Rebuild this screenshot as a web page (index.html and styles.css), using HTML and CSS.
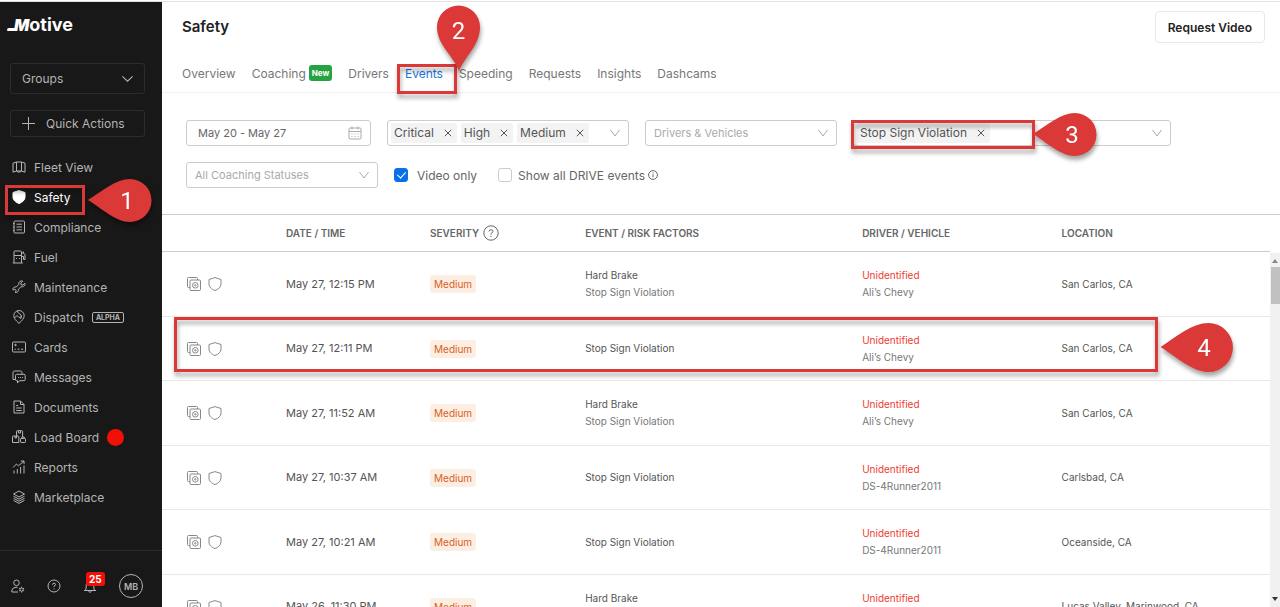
FILE: index.html
```html
<!DOCTYPE html>
<html lang="en">
<head>
<meta charset="utf-8">
<title>Safety</title>
<link rel="stylesheet" href="styles.css">
</head>
<body>
<svg class="defs" aria-hidden="true">
  <symbol id="chev" viewBox="0 0 10 10"><path d="M.5 2 5 8 9.500 2"/></symbol>
  <symbol id="x" viewBox="0 0 8 8"><path d="M.8.8l6.400 6.400M7.200.8.8 7.200"/></symbol>
  <symbol id="clip" viewBox="0 0 14 14"><path d="M3 10.500H1.500a1 1 0 0 1-1-1v-8a1 1 0 0 1 1-1h8a1 1 0 0 1 1 1V3"/><rect x="3" y="3" width="10.500" height="10.500" rx="1"/><circle cx="8.300" cy="8.300" r="2.800"/><circle cx="8.300" cy="8.300" r=".7"/></symbol>
  <symbol id="shield" viewBox="0 0 14 14"><path d="M7 .6 13 2.500V7c0 3-2.500 5.300-6 6.500C3.500 12.300 1 10 1 7V2.500z"/></symbol>
  <symbol id="pin" viewBox="0 0 64 43"><path d="M0 21C14 12 28 0 42 0a21.500 21.500 0 0 1 0 43C28 43 13 29 0 21z"/></symbol>
</svg>
<div class="app">
  <aside class="sidebar">
    <a class="logo" href="#"><span class="logo-m">M</span>otive</a>
    <button class="side-btn groups">Groups<svg class="ic chev" viewBox="0 0 10 10"><path d="M.3 3 5 7.500 9.700 3"/></svg></button>
    <button class="side-btn quick"><svg class="ic plus" viewBox="0 0 13 13"><path d="M6.500 0v13M0 6.500h13"/></svg>Quick Actions</button>
    <nav class="nav">
      <a href="#"><svg class="ic" viewBox="0 0 14 14"><path d="M1 3.200 4.500 2v9L1 12.200zM4.500 2h5v9h-5M9.500 11l3.500 1.200v-9L9.500 2M4.500 11l1.500 1h2l1.500-1"/></svg>Fleet View</a>
      <a href="#" class="on"><svg class="ic" viewBox="0 0 14 14"><use href="#shield"/></svg>Safety</a>
      <a href="#"><svg class="ic" viewBox="0 0 14 14"><rect x="2" y="1" width="10.500" height="12" rx="1"/><path d="M4.500 4.200H10M4.500 7H10M4.500 9.800H10M1 3.500h1.500M1 7h1.500M1 10.500h1.500"/></svg>Compliance</a>
      <a href="#"><svg class="ic" viewBox="0 0 14 14"><path d="M2 13V2q0-1 1-1h5.500q1 0 1 1v11M.8 13h10M2 5.500h7.500M4 8.500h1M7 8.500h1M9.500 3h2l1.500 1.500v5h-1.500v-3H9.500M11.500 3V1.500"/></svg>Fuel</a>
      <a href="#"><svg class="ic" viewBox="0 0 14 14"><path d="M12.800 3.200 11 5 9 4.800 8.800 3l1.900-1.900C8.500.3 6.400 1.800 6.800 4.400L4.300 7C2.200 6.400.5 8 1 10l1.800-.8 1.400 1.200-.9 2.200c2.300.3 3.500-1.600 3-3.300l2.800-2.600c2.600.5 4.500-1.200 3.700-3.500z"/></svg>Maintenance</a>
      <a href="#"><svg class="ic" viewBox="0 0 14 14"><path d="M7 13.400C4 10.500 1.800 8.500 1.800 5.700a5.200 5.200 0 0 1 10.400 0c0 2.800-2.200 4.800-5.200 7.700zM2.500 8 5 5.500 7 7.500l3-1M5.500 1c0 2 1 2 2.500 3s2 3 .5 5"/></svg>Dispatch<span class="alpha">ALPHA</span></a>
      <a href="#"><svg class="ic" viewBox="0 0 14 14"><rect x=".5" y="2" width="13" height="10" rx="1"/><path d="M2.700 5h1.600M2.700 9.200h1.200M5.500 9.200h2M9 9.200h2.200"/><circle cx="3.500" cy="5" r=".7"/></svg>Cards</a>
      <a href="#"><svg class="ic" viewBox="0 0 14 14"><path d="M3.500 9.500H1v-7Q1 1 2.500 1h6Q10 1 10 2.500V4M3.500 5.500q0-1.200 1.200-1.200h7.300q1.200 0 1.200 1.200v4q0 1.200-1.200 1.200H7.500L5.500 13v-2.300h-.8q-1.200 0-1.200-1.200zM6 7.600h1M8 7.600h1M10 7.600h1"/></svg>Messages</a>
      <a href="#"><svg class="ic" viewBox="0 0 14 14"><path d="M2 1h6.500L12 4.500V13H2zM8.500 1v3.500H12M4.200 5.500h2M4.200 8h5.500M4.200 10.500h5.500"/></svg>Documents</a>
      <a href="#"><svg class="ic" viewBox="0 0 14 14"><path d="M4.500 6V1.500q0-.8.800-.8h4.500q.8 0 .8.800V7M6.500 1v2h2V1M.5 12.500V6.800q0-.8.800-.8H6q.8 0 .8.800v5.700zM3 6v2h1.500V6"/><rect x="8.500" y="8.500" width="5" height="4" rx=".7"/><path d="M9.800 8.500V7h2.400v1.500"/></svg>Load Board<span class="dot"></span></a>
      <a href="#"><svg class="ic" viewBox="0 0 14 14"><path d="M2 13.500v-3M5.300 13.500V9M8.600 13.500V7M12 13.500V5.500M1 7.500 4.500 4l2 1.800L12 1M8.800 1H12v3"/></svg>Reports</a>
      <a href="#"><svg class="ic" viewBox="0 0 14 14"><path d="M7 1l5.500 3L7 7 1.500 4zM1.500 6.200l5.500 3 5.500-3M1.500 8.300l5.500 3 5.500-3M1.500 10.400l5.500 3 5.500-3"/></svg>Marketplace</a>
    </nav>
    <div class="side-foot">
      <button aria-label="Admin"><svg class="ic" viewBox="0 0 14 14"><circle cx="5.500" cy="3.800" r="2.800"/><path d="M7 13H.8v-1.500Q1.500 8.300 5 8.300h1.500"/><circle cx="10.600" cy="10.600" r="1.600"/><path d="M10.600 7.700v1.200M10.600 12.300v1.200M8.100 9.200l1 .6M12.100 11.400l1 .6M8.100 12l1-.6M12.100 9.800l1-.6"/></svg></button>
      <button aria-label="Help"><svg class="ic" viewBox="0 0 14 14"><circle cx="7" cy="7" r="6"/><path d="M5.500 5.700q0-1.500 1.500-1.500t1.500 1.400Q8.500 6.500 7 7.200V8M7 9.300v1"/></svg></button>
      <button class="bell" aria-label="Notifications"><svg class="ic" viewBox="0 0 14 14"><path d="M1 11.500h12M2.500 11.500 3.200 9V5.500a3.800 3.800 0 0 1 7.600 0V9l.7 2.500M5.500 12.500q1.500 1.500 3 0"/></svg><span class="count">25</span></button>
      <button class="avatar">MB</button>
    </div>
  </aside>

  <main class="main">
    <header class="top">
      <h1>Safety</h1>
      <button class="request">Request Video</button>
    </header>
    <nav class="tabs">
      <a href="#">Overview</a><a href="#">Coaching<span class="new">New</span></a><a href="#">Drivers</a><a href="#" class="on">Events</a><a href="#">Speeding</a><a href="#">Requests</a><a href="#">Insights</a><a href="#">Dashcams</a>
    </nav>
    <form class="filters">
      <div class="line">
        <label class="field date"><input type="text" value="May 20 - May 27" aria-label="Date range"><svg class="ic" viewBox="0 0 14 14"><rect x="1" y="2" width="12" height="11" rx="1"/><path d="M1 5.500h12M4 .5v3M10 .5v3M3.500 8h1M6.500 8h1M9.500 8h1M3.500 10.500h1M6.500 10.500h1M9.500 10.500h1"/></svg></label>
        <div class="field tags sev">
          <span class="tag">Critical<button type="button" aria-label="Remove Critical"><svg class="ic"><use href="#x"/></svg></button></span>
          <span class="tag">High<button type="button" aria-label="Remove High"><svg class="ic"><use href="#x"/></svg></button></span>
          <span class="tag">Medium<button type="button" aria-label="Remove Medium"><svg class="ic"><use href="#x"/></svg></button></span>
          <svg class="ic down"><use href="#chev"/></svg>
        </div>
        <label class="field drv"><select aria-label="Drivers"><option>Drivers &amp; Vehicles</option></select><svg class="ic down"><use href="#chev"/></svg></label>
        <div class="field tags evt">
          <span class="tag">Stop Sign Violation<button type="button" aria-label="Remove Stop Sign Violation"><svg class="ic"><use href="#x"/></svg></button></span>
          <svg class="ic down"><use href="#chev"/></svg>
        </div>
      </div>
      <div class="line">
        <label class="field coach"><select aria-label="Coaching status"><option>All Coaching Statuses</option></select><svg class="ic down"><use href="#chev"/></svg></label>
        <label class="check"><input type="checkbox" checked>Video only</label>
        <label class="check second"><input type="checkbox">Show all DRIVE events<svg class="ic info" viewBox="0 0 10 10"><circle cx="5" cy="5" r="4.400"/><path d="M5 4.300v3M5 2.500v1"/></svg></label>
      </div>
    </form>
    <section class="events">
      <div class="scroll">
      <table>
        <colgroup><col class="c0"><col class="c1"><col class="c2"><col class="c3"><col class="c4"><col></colgroup>
        <thead><tr><th></th><th>DATE / TIME</th><th><span class="help">SEVERITY<svg class="ic" viewBox="0 0 16 16"><circle cx="8" cy="8" r="7.200"/><path d="M6 6.500Q6 4.800 8 4.800t2 1.600Q10 7.500 8 8.500v1M8 10.800v1.200"/></svg></span></th><th>EVENT / RISK FACTORS</th><th>DRIVER / VEHICLE</th><th>LOCATION</th></tr></thead>
        <tbody>
          <tr><td><span class="acts"><button aria-label="Clip"><svg class="ic"><use href="#clip"/></svg></button><button aria-label="Safety"><svg class="ic"><use href="#shield"/></svg></button></span></td><td class="when">May 27, 12:15 PM</td><td><span class="med">Medium</span></td><td>Hard Brake<small>Stop Sign Violation</small></td><td><b>Unidentified</b><small>Ali’s Chevy</small></td><td>San Carlos, CA</td></tr>
          <tr><td><span class="acts"><button aria-label="Clip"><svg class="ic"><use href="#clip"/></svg></button><button aria-label="Safety"><svg class="ic"><use href="#shield"/></svg></button></span></td><td class="when">May 27, 12:11 PM</td><td><span class="med">Medium</span></td><td>Stop Sign Violation</td><td><b>Unidentified</b><small>Ali’s Chevy</small></td><td>San Carlos, CA</td></tr>
          <tr><td><span class="acts"><button aria-label="Clip"><svg class="ic"><use href="#clip"/></svg></button><button aria-label="Safety"><svg class="ic"><use href="#shield"/></svg></button></span></td><td class="when">May 27, 11:52 AM</td><td><span class="med">Medium</span></td><td>Hard Brake<small>Stop Sign Violation</small></td><td><b>Unidentified</b><small>Ali’s Chevy</small></td><td>San Carlos, CA</td></tr>
          <tr><td><span class="acts"><button aria-label="Clip"><svg class="ic"><use href="#clip"/></svg></button><button aria-label="Safety"><svg class="ic"><use href="#shield"/></svg></button></span></td><td class="when">May 27, 10:37 AM</td><td><span class="med">Medium</span></td><td>Stop Sign Violation</td><td><b>Unidentified</b><small>DS-4Runner2011</small></td><td>Carlsbad, CA</td></tr>
          <tr><td><span class="acts"><button aria-label="Clip"><svg class="ic"><use href="#clip"/></svg></button><button aria-label="Safety"><svg class="ic"><use href="#shield"/></svg></button></span></td><td class="when">May 27, 10:21 AM</td><td><span class="med">Medium</span></td><td>Stop Sign Violation</td><td><b>Unidentified</b><small>DS-4Runner2011</small></td><td>Oceanside, CA</td></tr>
          <tr><td><span class="acts"><button aria-label="Clip"><svg class="ic"><use href="#clip"/></svg></button><button aria-label="Safety"><svg class="ic"><use href="#shield"/></svg></button></span></td><td class="when">May 26, 11:30 PM</td><td><span class="med">Medium</span></td><td>Hard Brake<small>Stop Sign Violation</small></td><td><b>Unidentified</b><small>DS-4Runner2011</small></td><td>Lucas Valley, Marinwood, CA</td></tr>
        </tbody>
      </table>
      </div>
      <div class="bar"><svg viewBox="0 0 6 4"><path d="M0 4 3 0l3 4z"/></svg><span class="thumb"></span><svg class="dn" viewBox="0 0 6 4"><path d="M0 0h6L3 4z"/></svg></div>
    </section>
  </main>
</div>

<div class="frame f1"></div><div class="frame f2"></div><div class="frame f3"></div><div class="frame f4"></div>
<div class="pin p1"><svg><use href="#pin"/></svg><span>1</span></div>
<div class="pin p2"><svg viewBox="0 0 43 66"><path d="M22 66C16 50 0 40 0 22a21.500 21.500 0 0 1 43 0C43 40 29 50 22 66z"/></svg><span>2</span></div>
<div class="pin p3"><svg><use href="#pin"/></svg><span>3</span></div>
<div class="pin p4"><svg><use href="#pin"/></svg><span>4</span></div>
</body>
</html>
```

FILE: styles.css
```css
* { box-sizing: border-box; }
body { margin: 0; font-family: Inter, "Liberation Sans", sans-serif; font-size: 12px; color: #555; background: #fff; overflow: hidden; }
button, input, select { font: inherit; color: inherit; }
button { background: none; border: 0; padding: 0; }
a { color: inherit; text-decoration: none; }
.defs { position: absolute; width: 0; height: 0; }
.ic { width: 14px; height: 14px; fill: none; stroke: currentColor; stroke-width: 1; flex: none; }
.app { display: flex; height: 100vh; border-top: 1px solid #fff; }

.sidebar { width: 162px; flex: none; background: #181818; color: #b4b4b4; display: flex; flex-direction: column; border-top: 1px solid #ddd; }
.logo { display: flex; align-items: baseline; padding: 10px 0 0 7px; font-size: 18px; line-height: 26px; font-weight: 700; color: #fff; }
.logo-m { font-style: italic; font-size: 16px; font-weight: 900; position: relative; padding-left: 7px; }
.logo-m::before { content: ""; position: absolute; left: 0; bottom: 7px; width: 10px; height: 3px; background: #fff; border-radius: 2px 0 0 1px; }
.side-btn { display: flex; align-items: center; margin: 0 17px 0 10px; border: 1px solid #2c2c2c; border-radius: 3px; padding: 0 11px; }
.groups { margin-top: 25px; height: 31px; justify-content: space-between; }
.groups .chev { width: 11px; height: 11px; }
.quick { margin-top: 16px; height: 27px; gap: 11px; }
.quick .plus { width: 13px; height: 13px; }
.nav { display: flex; flex-direction: column; flex: 1; padding-top: 15px; }
.nav a { display: flex; align-items: center; height: 30px; padding-left: 12px; gap: 8px; }
.nav .on { color: #fff; }
.nav .on .ic { fill: #fff; }
.alpha { border: 1px solid #b4b4b4; border-radius: 2px; font-size: 7px; line-height: 9px; font-weight: 700; padding: 0 3px; }
.dot { width: 17px; height: 17px; border-radius: 50%; background: #f01008; }
.side-foot { display: flex; align-items: center; height: 57px; padding: 14px 19px 0 11px; border-top: 1px solid #2e2e2e; justify-content: space-between; }
.side-foot button { display: flex; }
.bell { position: relative; }
.count { position: absolute; left: 3px; top: -7px; background: #f01008; color: #fff; border-radius: 3px; font-size: 10px; font-weight: 700; line-height: 14px; padding: 0 3px; }
.side-foot .avatar { width: 24px; height: 24px; border: 1px solid #b4b4b4; border-radius: 50%; align-items: center; justify-content: center; font-size: 9px; font-weight: 600; }

.main { flex: 1; min-width: 0; display: flex; flex-direction: column; border-top: 1px solid #e3e3e3; }
.top { display: flex; justify-content: space-between; padding: 9px 15px 0 20px; align-items: center; }
h1 { margin: 0; font-size: 15px; line-height: 32px; font-weight: 600; color: #222; }
.request { height: 32px; padding: 0 12px; border: 1px solid #e8e8e8; border-radius: 4px; font-weight: 600; color: #222; }
.tabs { display: flex; gap: 16px; align-items: center; height: 50px; padding: 11px 20px 0; border-bottom: 1px solid #f2f2f2; color: #777; }
.tabs a { display: flex; align-items: center; gap: 3px; }
.tabs .on { color: #1378e5; }
.new { background: #27a243; color: #fff; border-radius: 3px; font-size: 8px; font-weight: 700; line-height: 16px; padding: 0 3px; }
.filters { display: flex; flex-direction: column; gap: 16px; padding: 27px 20px 26px 24px; }
.line { display: flex; align-items: center; gap: 16px; }
.field { display: flex; align-items: center; height: 26px; border: 1px solid #ccc; border-radius: 3px; padding: 0 8px; color: #aaa; }
.field input, .field select { flex: 1; min-width: 0; border: 0; background: none; padding: 0; appearance: none; outline: 0; height: 24px; font-size: 11px; }
.date { width: 185px; padding-left: 11px; }
.date input { color: #666; }
.sev { width: 242px; }
.drv { width: 192px; }
.evt { width: 318px; }
.coach { width: 192px; }
.tags { padding-left: 3px; gap: 4px; }
.tag { display: flex; align-items: center; background: #f3f3f3; color: #555; line-height: 20px; padding: 0 3px; border-radius: 2px; gap: 8px; white-space: nowrap; }
.tag button { display: flex; padding: 0 2px; }
.tag .ic { width: 8px; height: 8px; }
.down { width: 10px; height: 10px; margin-left: auto; }
.check { display: flex; align-items: center; gap: 9px; color: #666; }
.check input { appearance: none; margin: 0; width: 14px; height: 14px; border: 1px solid #ccc; border-radius: 3px; }
.check input:checked { background: #0b6fe8; border-color: #0b6fe8; display: flex; justify-content: center; }
.check input:checked::after { content: ""; width: 4px; height: 7px; margin-top: 1px; border: solid #fff; border-width: 0 1px 1px 0; transform: rotate(42deg); }
.second { margin-left: 5px; gap: 6px; }
.info { width: 10px; height: 10px; margin-left: -3px; }

.events { flex: 1; min-height: 0; display: flex; border-top: 1px solid #ccc; }
.scroll { flex: 1; overflow: hidden; }
table { width: 100%; border-collapse: separate; border-spacing: 0; table-layout: fixed; font-size: 10px; }
.c0 { width: 124px; } .c1 { width: 13%; } .c2 { width: 14%; } .c3 { width: 25%; } .c4 { width: 18%; }
th { height: 37px; padding: 0; text-align: left; font-weight: 600; color: #666; border-bottom: 1px solid #ccc; }
td { height: 65px; padding: 0; border-bottom: 1px solid #e8e8e8; line-height: 17px; }
tr:nth-child(even) td { height: 64px; }
td small { display: block; font-size: 10px; color: #777; }
td b { font-weight: 400; color: #ee3b30; }
.when { font-size: 11px; }
.help { display: flex; align-items: center; gap: 4px; }
.help .ic { width: 16px; height: 16px; }
.acts { display: flex; gap: 7px; padding-left: 25px; color: #888; }
.acts button { display: flex; }
.med { display: inline-block; background: #fdeee4; color: #d9601a; border-radius: 3px; padding: 0 4px; line-height: 18px; }
.bar { width: 10px; margin-top: 38px; background: #f1f1f1; display: flex; flex-direction: column; align-items: center; padding: 6px 0; }
.bar svg { width: 6px; height: 4px; fill: #888; }
.bar .dn { margin-top: auto; fill: #333; }
.thumb { width: 9px; height: 37px; background: #c1c1c1; margin: 4px 0 0 1px; }

.frame, .pin { position: absolute; filter: drop-shadow(1px 4px 2px rgba(0,0,0,.35)); pointer-events: none; }
.frame { border: 3px solid #db3838; }
.f1 { left: 5px; top: 185px; width: 80px; height: 30px; }
.f2 { left: 397px; top: 64px; width: 60px; height: 30px; }
.f3 { left: 851px; top: 120px; width: 184px; height: 29px; }
.f4 { left: 174px; top: 317px; width: 984px; height: 55px; }
.pin { display: flex; align-items: center; justify-content: center; padding-left: 14px; width: 64px; height: 43px; color: #fff; font: 24px Roboto, sans-serif; }
.pin svg { position: absolute; inset: 0; width: 100%; height: 100%; fill: #db3838; }
.pin span { position: relative; }
.p1 { left: 88px; top: 179px; }
.p2 { left: 437px; top: 5px; width: 43px; height: 66px; padding: 0 0 15px; }
.p3 { left: 1033px; top: 113px; }
.p4 { left: 1160px; top: 323px; width: 74px; height: 49px; }
```
